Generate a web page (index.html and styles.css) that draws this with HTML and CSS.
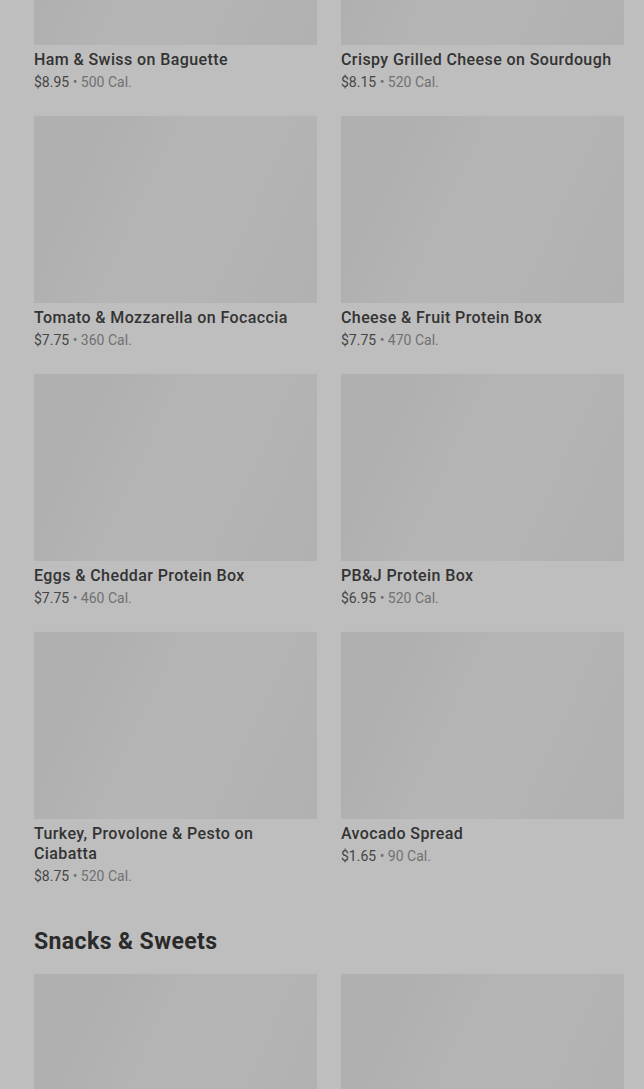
FILE: index.html
```html
<!DOCTYPE html>
<html lang="en">
<head>
<meta charset="utf-8">
<title>Menu</title>
<link rel="stylesheet" href="styles.css">
</head>
<body>
<main class="menu">
  <section class="section">
    <div class="grid">
      <article class="card">
        <div class="thumb"></div>
        <h3 class="name">Ham &amp; Swiss on Baguette</h3>
        <p class="meta"><span class="price">$8.95</span> • 500 Cal.</p>
      </article>
      <article class="card">
        <div class="thumb"></div>
        <h3 class="name">Crispy Grilled Cheese on Sourdough</h3>
        <p class="meta"><span class="price">$8.15</span> • 520 Cal.</p>
      </article>
      <article class="card">
        <div class="thumb"></div>
        <h3 class="name">Tomato &amp; Mozzarella on Focaccia</h3>
        <p class="meta"><span class="price">$7.75</span> • 360 Cal.</p>
      </article>
      <article class="card">
        <div class="thumb"></div>
        <h3 class="name">Cheese &amp; Fruit Protein Box</h3>
        <p class="meta"><span class="price">$7.75</span> • 470 Cal.</p>
      </article>
      <article class="card">
        <div class="thumb"></div>
        <h3 class="name">Eggs &amp; Cheddar Protein Box</h3>
        <p class="meta"><span class="price">$7.75</span> • 460 Cal.</p>
      </article>
      <article class="card">
        <div class="thumb"></div>
        <h3 class="name">PB&amp;J Protein Box</h3>
        <p class="meta"><span class="price">$6.95</span> • 520 Cal.</p>
      </article>
      <article class="card">
        <div class="thumb"></div>
        <h3 class="name">Turkey, Provolone &amp; Pesto on Ciabatta</h3>
        <p class="meta"><span class="price">$8.75</span> • 520 Cal.</p>
      </article>
      <article class="card">
        <div class="thumb"></div>
        <h3 class="name">Avocado Spread</h3>
        <p class="meta"><span class="price">$1.65</span> • 90 Cal.</p>
      </article>
    </div>
  </section>
  <section class="section">
    <h2 class="section-title">Snacks &amp; Sweets</h2>
    <div class="grid">
      <article class="card">
        <div class="thumb"></div>
      </article>
      <article class="card">
        <div class="thumb"></div>
      </article>
    </div>
  </section>
</main>
</body>
</html>
```
FILE: styles.css
```css
html, body {
  margin: 0;
  padding: 0;
  background: #bebebe;
  height: 100%;
  overflow: hidden;
}

body {
  font-family: Roboto, "Liberation Sans", Arial, sans-serif;
  color: #2e2e2e;
}

.menu {
  margin-top: -143px;
  padding: 0 20px 0 34px;
}

.grid {
  display: grid;
  grid-template-columns: 283px 283px;
  column-gap: 24px;
  row-gap: 23px;
}

.card {
  display: flex;
  flex-direction: column;
}

.thumb {
  height: 188px;
  background: linear-gradient(115deg, #b0b0b0 0%, #b0b0b0 22%, #b5b5b5 45%, #b5b5b5 62%, #b2b2b2 85%, #b1b1b1 100%);
  border-top: 1px solid #bcbcbc;
  box-sizing: border-box;
}

.name {
  margin: 5px 0 0;
  font-size: 16px;
  line-height: 20px;
  font-weight: 500;
  letter-spacing: 0.4px;
  color: #333333;
}

.meta {
  margin: 2px 0 0;
  font-size: 14px;
  line-height: 20px;
  color: #717171;
}

.price {
  color: #454545;
}

.section-title {
  margin: 42px 0 17px;
  font-size: 23px;
  line-height: 28px;
  font-weight: 700;
  color: #2b2b2b;
  letter-spacing: 0.4px;
}
```
